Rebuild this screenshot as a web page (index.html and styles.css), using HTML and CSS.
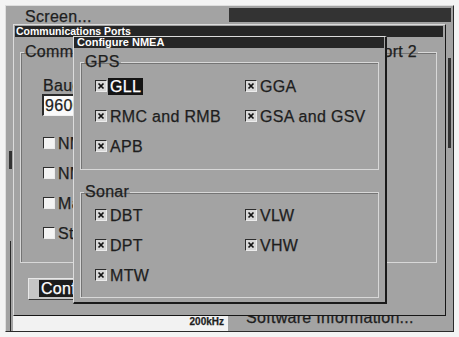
FILE: index.html
```html
<!DOCTYPE html>
<html lang="en">
<head>
    <meta charset="UTF-8">
    <title>Configure NMEA</title>
    <link rel="stylesheet" href="styles.css">
</head>
<body>
    <div class="screen">
        <div class="menu">
            <div class="menu-top">
                <span class="menu-item">Screen...</span>
                <span class="menu-sel"></span>
            </div>
            <div class="menu-fill"></div>
            <div class="menu-bottom">
                <span class="status">200kHz</span>
                <span class="menu-item">Software Information...</span>
            </div>
            <span class="thumb thumb-left"></span>
            <span class="thumb thumb-right"></span>
            <span class="rule-left"></span>
        </div>

        <!-- Communications Ports window -->
        <div class="window comm">
            <div class="titlebar">Communications Ports</div>
            <div class="comm-body">
                <div class="ports">
                    <fieldset class="group port">
                        <legend>Communications Port 1</legend>
                        <div class="port-content">
                            <div class="field-label">Baud Rate:</div>
                            <div class="textbox">9600</div>
                            <div class="checks">
                                <div class="option"><span class="cb cb-empty"></span><span class="opt-text">NMEA Out</span></div>
                                <div class="option"><span class="cb cb-empty"></span><span class="opt-text">NMEA In</span></div>
                                <div class="option"><span class="cb cb-empty"></span><span class="opt-text">Map Datum</span></div>
                                <div class="option"><span class="cb cb-empty"></span><span class="opt-text">Status</span></div>
                            </div>
                        </div>
                    </fieldset>
                    <fieldset class="group port port-2">
                        <legend>Communications Port 2</legend>
                    </fieldset>
                </div>
                <div class="button"><span class="button-label">Configure NMEA...</span></div>
            </div>
        </div>

        <!-- Configure NMEA dialog -->
        <div class="window nmea">
            <div class="titlebar">Configure NMEA</div>
            <div class="nmea-body">
                <fieldset class="group gps">
                    <legend>GPS</legend>
                    <div class="options">
                        <div class="option"><span class="cb"><svg viewBox="0 0 10 10"><path d="M2.5 2.5l5 5M7.5 2.5l-5 5"/></svg></span><span class="opt-text selected">GLL</span></div>
                        <div class="option"><span class="cb"><svg viewBox="0 0 10 10"><path d="M2.5 2.5l5 5M7.5 2.5l-5 5"/></svg></span><span class="opt-text">GGA</span></div>
                        <div class="option"><span class="cb"><svg viewBox="0 0 10 10"><path d="M2.5 2.5l5 5M7.5 2.5l-5 5"/></svg></span><span class="opt-text">RMC and RMB</span></div>
                        <div class="option"><span class="cb"><svg viewBox="0 0 10 10"><path d="M2.5 2.5l5 5M7.5 2.5l-5 5"/></svg></span><span class="opt-text">GSA and GSV</span></div>
                        <div class="option"><span class="cb"><svg viewBox="0 0 10 10"><path d="M2.5 2.5l5 5M7.5 2.5l-5 5"/></svg></span><span class="opt-text">APB</span></div>
                    </div>
                </fieldset>
                <fieldset class="group sonar">
                    <legend>Sonar</legend>
                    <div class="options">
                        <div class="option"><span class="cb"><svg viewBox="0 0 10 10"><path d="M2.5 2.5l5 5M7.5 2.5l-5 5"/></svg></span><span class="opt-text">DBT</span></div>
                        <div class="option"><span class="cb"><svg viewBox="0 0 10 10"><path d="M2.5 2.5l5 5M7.5 2.5l-5 5"/></svg></span><span class="opt-text">VLW</span></div>
                        <div class="option"><span class="cb"><svg viewBox="0 0 10 10"><path d="M2.5 2.5l5 5M7.5 2.5l-5 5"/></svg></span><span class="opt-text">DPT</span></div>
                        <div class="option"><span class="cb"><svg viewBox="0 0 10 10"><path d="M2.5 2.5l5 5M7.5 2.5l-5 5"/></svg></span><span class="opt-text">VHW</span></div>
                        <div class="option"><span class="cb"><svg viewBox="0 0 10 10"><path d="M2.5 2.5l5 5M7.5 2.5l-5 5"/></svg></span><span class="opt-text">MTW</span></div>
                    </div>
                </fieldset>
            </div>
        </div>
    </div>
</body>
</html>
```

FILE: styles.css
```css
body {
    margin: 0;
    background: #f4f4f4;
    font-family: "Liberation Sans", Arial, sans-serif;
    font-size: 16px;
    letter-spacing: 0.3px;
    color: #1e1e1e;
    -webkit-text-stroke: 0.25px currentColor;
}
.screen {
    position: relative;
    width: 459px;
    height: 337px;
    padding: 5px 0 0 5px;
    box-sizing: border-box;
    overflow: hidden;
}

/* main menu behind the windows */
.menu {
    position: relative;
    width: 449px;
    height: 327px;
    box-sizing: border-box;
    background: #a3a3a3;
    border: 1px solid #dedede;
    border-right-color: #2a2a2a;
    border-bottom-color: #2a2a2a;
    display: flex;
    flex-direction: column;
}
.menu-top {
    display: grid;
    grid-template-columns: 223px 1fr;
    height: 19px;
}
.menu-item {
    line-height: 16px;
}
.menu-top .menu-item {
    padding: 3px 0 0 19px;
}
.menu-sel {
    margin: 2px 2px 0 0;
    height: 14px;
    background: #333;
}
.menu-fill {
    flex: 1;
}
.menu-bottom {
    display: grid;
    grid-template-columns: 215px 1fr;
    height: 21px;
    padding-left: 7px;
}
.menu-bottom .menu-item {
    padding-left: 18px;
}
.status {
    align-self: end;
    height: 15px;
    background: #f2f2f2;
    text-align: right;
    padding-right: 4px;
    font-size: 10px;
    font-weight: bold;
    letter-spacing: 0;
    line-height: 12px;
}
.thumb {
    position: absolute;
    background: #333;
}
.thumb-left {
    left: 3px;
    top: 145px;
    width: 3px;
    height: 18px;
}
.thumb-right {
    right: 2px;
    top: 52px;
    width: 3px;
    height: 90px;
}
.rule-left {
    position: absolute;
    left: 4px;
    top: 235px;
    bottom: 0;
    width: 1px;
    background: #2a2a2a;
}

/* windows */
.window {
    position: absolute;
    box-sizing: border-box;
    background: #a3a3a3;
    border: 1px solid #dcdcdc;
    border-right-color: #161616;
    border-bottom-color: #161616;
}
.titlebar {
    height: 11px;
    background: #262626;
    color: #fff;
    font-weight: bold;
    letter-spacing: 0;
    white-space: nowrap;
    overflow: hidden;
    -webkit-text-stroke: 0;
}
.comm {
    left: 13px;
    top: 24px;
    width: 433px;
    height: 292px;
}
.comm .titlebar {
    margin: 1px 2px 0 1px;
    padding-left: 1px;
    font-size: 10.5px;
    line-height: 11px;
}
.comm-body {
    padding: 7px 8px 0 6px;
}
.ports {
    display: grid;
    grid-template-columns: 212px 190px;
    column-gap: 15px;
}

.group {
    margin: 0;
    padding: 0;
    min-width: 0;
    box-sizing: border-box;
    border: 1px solid #d8d8d8;
    box-shadow: inset 1px 1px 0 #747474;
}
.group legend {
    padding: 0 1px;
    margin-left: 3px;
    line-height: 16px;
    white-space: nowrap;
}
.port {
    height: 219px;
}
.port-2 legend {
    margin-left: auto;
    margin-right: 18px;
}
.port-content {
    padding-left: 22px;
}
.field-label {
    margin-top: 18px;
    line-height: 16px;
}
.textbox {
    margin-left: -1px;
    width: 90px;
    height: 22px;
    box-sizing: border-box;
    background: #fafafa;
    border: 1px solid #f0f0f0;
    border-top: 2px solid #2a2a2a;
    border-left: 2px solid #2a2a2a;
    padding-left: 1px;
    line-height: 19px;
}
.checks {
    margin-top: 12px;
}
.checks .option {
    height: 30px;
}
.button {
    display: inline-block;
    margin: 15px 0 0 8px;
    background: #c6c6c6;
    border: 1px solid #e8e8e8;
    border-right-color: #3a3a3a;
    border-bottom-color: #3a3a3a;
    padding: 1px 3px 2px 10px;
}
.button-label {
    display: block;
    background: #1c1c1c;
    color: #fff;
    line-height: 17px;
    padding: 0 2px;
}

.nmea {
    left: 73px;
    top: 36px;
    width: 314px;
    height: 268px;
    border-width: 1px 2px 2px 1px;
    border-right-color: #1a1a1a;
    border-bottom-color: #1a1a1a;
}
.nmea .titlebar {
    margin-right: 1px;
    padding-left: 3px;
    font-size: 11px;
    line-height: 11px;
}
.nmea-body {
    padding: 6px 6px 0 6px;
}
.gps {
    height: 116px;
}
.sonar {
    height: 114px;
    margin-top: 14px;
}
.options {
    display: grid;
    grid-template-columns: 150px 1fr;
    grid-auto-rows: 30px;
    padding-left: 14px;
}
.gps .options {
    padding-top: 1px;
}

.option {
    display: flex;
    align-items: center;
    gap: 1px;
}
.cb {
    width: 12px;
    height: 12px;
    box-sizing: border-box;
    flex: none;
    background: #d8d8d8;
    border: 1px solid #ececec;
    border-top-color: #2c2c2c;
    border-left-color: #2c2c2c;
    display: flex;
}
.cb svg {
    width: 10px;
    height: 10px;
}
.cb path {
    fill: none;
    stroke: #111;
    stroke-width: 1.7;
}
.cb-empty {
    background: #f4f4f4;
}
.opt-text {
    padding: 0 2px;
    line-height: 17px;
    white-space: nowrap;
}
.opt-text.selected {
    background: #141414;
    color: #fff;
}
```
